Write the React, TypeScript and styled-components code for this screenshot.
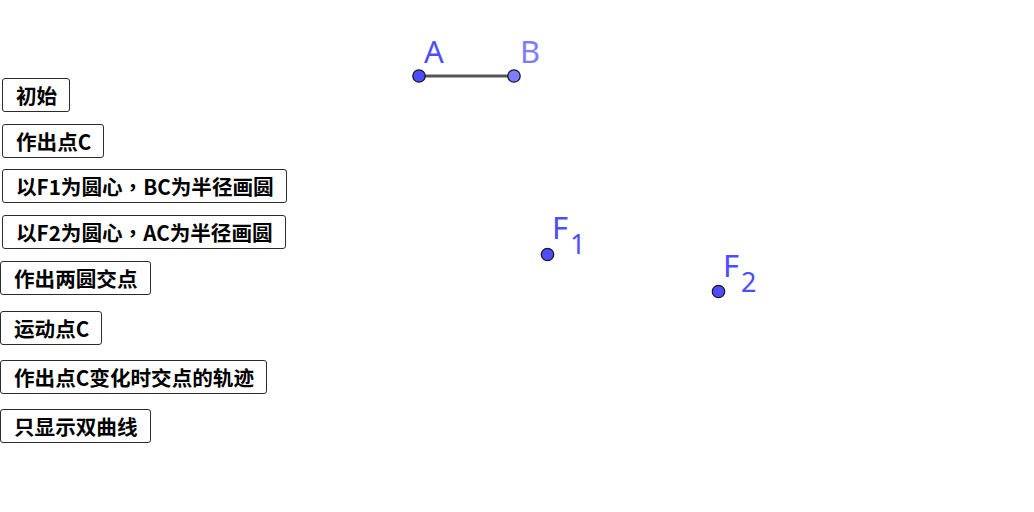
import React from "react";
import styled, { createGlobalStyle } from "styled-components";

const GlobalStyle = createGlobalStyle`
  html, body {
    margin: 0;
    padding: 0;
    background: #ffffff;
  }
  body {
    font-family: "Noto Sans", "Noto Sans CJK SC", sans-serif;
  }
`;

const Stage = styled.main`
  display: grid;
  width: 1034px;
  height: 512px;
  overflow: hidden;
  background: #ffffff;
`;

const Canvas = styled.svg`
  grid-area: 1 / 1;
  width: 1034px;
  height: 512px;
`;

const ButtonColumn = styled.div`
  grid-area: 1 / 1;
  display: flex;
  flex-direction: column;
  align-items: flex-start;
  padding-top: 78px;
  z-index: 1;
`;

const ToolButton = styled.button<{ $inset: number; $space: number }>`
  display: flex;
  align-items: center;
  height: 34px;
  margin: ${(p) => p.$space}px 0 0 ${(p) => p.$inset}px;
  padding: 0 12px 0 13px;
  border: 1px solid #2b2b2b;
  border-radius: 3px;
  background: #ffffff;
  color: #000000;
  font-family: "Noto Sans CJK SC", "Noto Sans", sans-serif;
  font-weight: 700;
  font-size: 20.6px;
  line-height: 1;
  white-space: nowrap;
  cursor: pointer;
`;

/* the comma sits centred in its cell, as in traditional-style fonts */
const Comma = styled.span`
  font-family: "Noto Sans CJK TC", "Noto Sans CJK SC", sans-serif;
`;

const Label = styled.text<{ $color: string }>`
  font-family: "Noto Sans", "DejaVu Sans", sans-serif;
  font-size: 31px;
  fill: ${(p) => p.$color};
`;

const Sub = styled.tspan`
  font-size: 27px;
`;

const buttons = [
  { label: "初始", inset: 2, space: 0 },
  { label: "作出点C", inset: 2, space: 12 },
  { label: "以F1为圆心，BC为半径画圆", inset: 2, space: 11 },
  { label: "以F2为圆心，AC为半径画圆", inset: 2, space: 12 },
  { label: "作出两圆交点", inset: 0, space: 12 },
  { label: "运动点C", inset: 0, space: 16 },
  { label: "作出点C变化时交点的轨迹", inset: 0, space: 15 },
  { label: "只显示双曲线", inset: 0, space: 15 },
];

const BLUE = "#4d4dff";
const LIGHT = "#7d7dff";

const Point = ({ x, y, fill }: { x: number; y: number; fill: string }) => (
  <circle cx={x} cy={y} r={6.2} fill={fill} stroke="#1a1a1a" strokeWidth={1.3} />
);

const renderLabel = (text: string) => {
  const parts = text.split("，");
  return parts.map((part, i) => (
    <React.Fragment key={i}>
      {i > 0 && <Comma>，</Comma>}
      {part}
    </React.Fragment>
  ));
};

export default function App() {
  return (
    <>
      <GlobalStyle />
      <Stage>
        <Canvas viewBox="0 0 1034 512">
          <line x1={419} y1={76} x2={514} y2={76} stroke="#555555" strokeWidth={3} />
          <Point x={419} y={76} fill={BLUE} />
          <Point x={514} y={76} fill={LIGHT} />
          <Label $color={BLUE} x={424} y={63}>
            A
          </Label>
          <Label $color={LIGHT} x={520} y={63}>
            B
          </Label>

          <Point x={547.5} y={254.5} fill={BLUE} />
          <Label $color={BLUE} x={552} y={239}>
            F
            <Sub dx={2} dy={15}>
              1
            </Sub>
          </Label>

          <Point x={718.5} y={291.5} fill={BLUE} />
          <Label $color={BLUE} x={723} y={277}>
            F
            <Sub dx={2} dy={15}>
              2
            </Sub>
          </Label>
        </Canvas>

        <ButtonColumn>
          {buttons.map((b) => (
            <ToolButton key={b.label} $inset={b.inset} $space={b.space}>
              {renderLabel(b.label)}
            </ToolButton>
          ))}
        </ButtonColumn>
      </Stage>
    </>
  );
}
